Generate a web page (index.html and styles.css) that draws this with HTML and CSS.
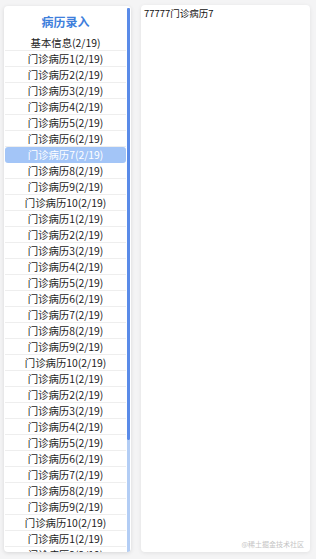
FILE: index.html
```html
<!DOCTYPE html>
<html lang="zh">
<head>
<meta charset="utf-8">
<link rel="stylesheet" href="styles.css">
</head>
<body>
<div class="page">
  <aside class="side">
    <div class="scroll">
      <div class="title">病历录入</div>
      <ul class="list">
        <li>基本信息(2/19)</li>
        <li>门诊病历1(2/19)</li><li>门诊病历2(2/19)</li><li>门诊病历3(2/19)</li><li>门诊病历4(2/19)</li><li>门诊病历5(2/19)</li>
        <li>门诊病历6(2/19)</li><li class="active">门诊病历7(2/19)</li><li>门诊病历8(2/19)</li><li>门诊病历9(2/19)</li><li>门诊病历10(2/19)</li>
        <li>门诊病历1(2/19)</li><li>门诊病历2(2/19)</li><li>门诊病历3(2/19)</li><li>门诊病历4(2/19)</li><li>门诊病历5(2/19)</li>
        <li>门诊病历6(2/19)</li><li>门诊病历7(2/19)</li><li>门诊病历8(2/19)</li><li>门诊病历9(2/19)</li><li>门诊病历10(2/19)</li>
        <li>门诊病历1(2/19)</li><li>门诊病历2(2/19)</li><li>门诊病历3(2/19)</li><li>门诊病历4(2/19)</li><li>门诊病历5(2/19)</li>
        <li>门诊病历6(2/19)</li><li>门诊病历7(2/19)</li><li>门诊病历8(2/19)</li><li>门诊病历9(2/19)</li><li>门诊病历10(2/19)</li>
        <li>门诊病历1(2/19)</li><li>门诊病历2(2/19)</li>
      </ul>
    </div>
    <div class="scrollbar"><div class="thumb"></div><div class="track"></div></div>
  </aside>
  <main class="content">
    <div class="record">77777门诊病历7</div>
  </main>
</div>
<div class="watermark">@稀土掘金技术社区</div>
</body>
</html>
```
FILE: styles.css
```css
* { box-sizing: border-box; }
html, body { margin: 0; padding: 0; }
body {
  width: 316px;
  height: 559px;
  background: #f4f4f5;
  font-family: "Noto Sans CJK SC", "Noto Sans", sans-serif;
  color: #222;
  overflow: hidden;
}
.page {
  display: flex;
  gap: 10px;
  padding: 6px 6px 7px 4px;
  height: 559px;
}
.side {
  width: 127px;
  flex: none;
  height: 546px;
  display: flex;
  background: #fff;
  border-radius: 4px;
  box-shadow: 0 1px 4px rgba(0,0,0,0.12);
  overflow: hidden;
  padding-right: 1px;
}
.scroll {
  flex: 1;
  min-width: 0;
  overflow: hidden;
}
.scrollbar {
  width: 3px;
  flex: none;
  display: flex;
  flex-direction: column;
  padding-top: 2px;
}
.thumb {
  height: 432px;
  background: #5a8be8;
  border-radius: 1px;
}
.track {
  flex: 1;
  background: #b3cdf4;
}
.title {
  height: 29px;
  display: flex;
  align-items: center;
  justify-content: center;
  color: #3f7fdc;
  font-weight: bold;
  font-size: 12px;
  padding-top: 1px;
}
.list {
  list-style: none;
  margin: 0;
  padding: 0 1px;
}
.list li {
  height: 16px;
  line-height: 15px;
  font-size: 10.4px;
  text-align: center;
  white-space: nowrap;
  border-bottom: 1px solid #eeeeee;
  color: #222;
}
.list li.active {
  background: #a3c5f7;
  color: #fff;
  border-radius: 3px;
  border-bottom-color: transparent;
}
.content {
  flex: 1;
  background: #fff;
  border-radius: 4px;
  box-shadow: 0 1px 4px rgba(0,0,0,0.08);
  margin-top: -1px;
  padding: 2px 3px;
}
.record {
  font-size: 9.5px;
  line-height: 12px;
  color: #111;
}
.watermark {
  position: absolute;
  right: 12px;
  bottom: 10px;
  font-size: 7px;
  color: #c4c4c4;
}
```
